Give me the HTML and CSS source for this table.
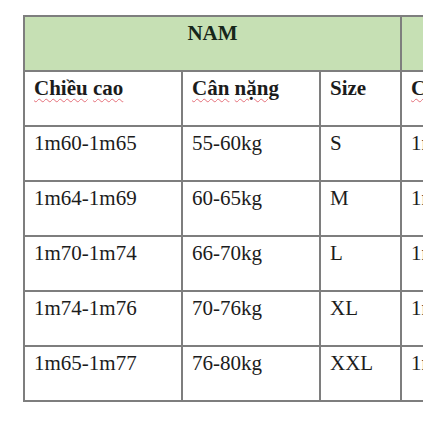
FILE: index.html
```html
<!DOCTYPE html>
<html lang="vi">
<head>
<meta charset="utf-8">
<link rel="stylesheet" href="styles.css">
</head>
<body>
<table class="size-table">
  <colgroup>
    <col class="c1"><col class="c2"><col class="c3"><col class="c4">
  </colgroup>
  <tr class="group">
    <th colspan="3">NAM</th>
    <th class="cut">NỮ</th>
  </tr>
  <tr class="head">
    <th><span class="spell">Chiều</span> <span class="spell">cao</span></th>
    <th><span class="spell">Cân</span> <span class="spell">nặng</span></th>
    <th>Size</th>
    <th><span class="spell">Chiều</span> <span class="spell">cao</span></th>
  </tr>
  <tr><td>1m60-1m65</td><td>55-60kg</td><td>S</td><td>1m50-1m55</td></tr>
  <tr><td>1m64-1m69</td><td>60-65kg</td><td>M</td><td>1m55-1m60</td></tr>
  <tr><td>1m70-1m74</td><td>66-70kg</td><td>L</td><td>1m60-1m65</td></tr>
  <tr><td>1m74-1m76</td><td>70-76kg</td><td>XL</td><td>1m65-1m70</td></tr>
  <tr><td>1m65-1m77</td><td>76-80kg</td><td>XXL</td><td>1m70-1m75</td></tr>
</table>
</body>
</html>
```
FILE: styles.css
```css
html, body {
  margin: 0;
  padding: 0;
  background: #ffffff;
  overflow: hidden;
  width: 423px;
  height: 423px;
}

.size-table {
  margin: 15px 0 0 23px;
  border-collapse: collapse;
  table-layout: fixed;
  width: 500px;
  font-family: "Liberation Serif", "Times New Roman", serif;
  font-size: 21px;
  line-height: 24px;
  color: #1c1c1c;
}

.c1 { width: 158px; }
.c2 { width: 138px; }
.c3 { width: 81px; }
.c4 { width: 123px; }

.size-table tr {
  height: 55px;
}

.size-table th,
.size-table td {
  border: 2px solid #7e7e7e;
  padding: 4px 9px 0 9px;
  vertical-align: top;
  text-align: left;
  white-space: nowrap;
  overflow: hidden;
}

.size-table th {
  font-weight: bold;
}

.group th {
  background: #c6e0b4;
  text-align: center;
  color: #16261a;
}

.spell {
  text-decoration: underline wavy #e5707a;
  text-decoration-thickness: 1px;
  text-underline-offset: 3px;
}
```
